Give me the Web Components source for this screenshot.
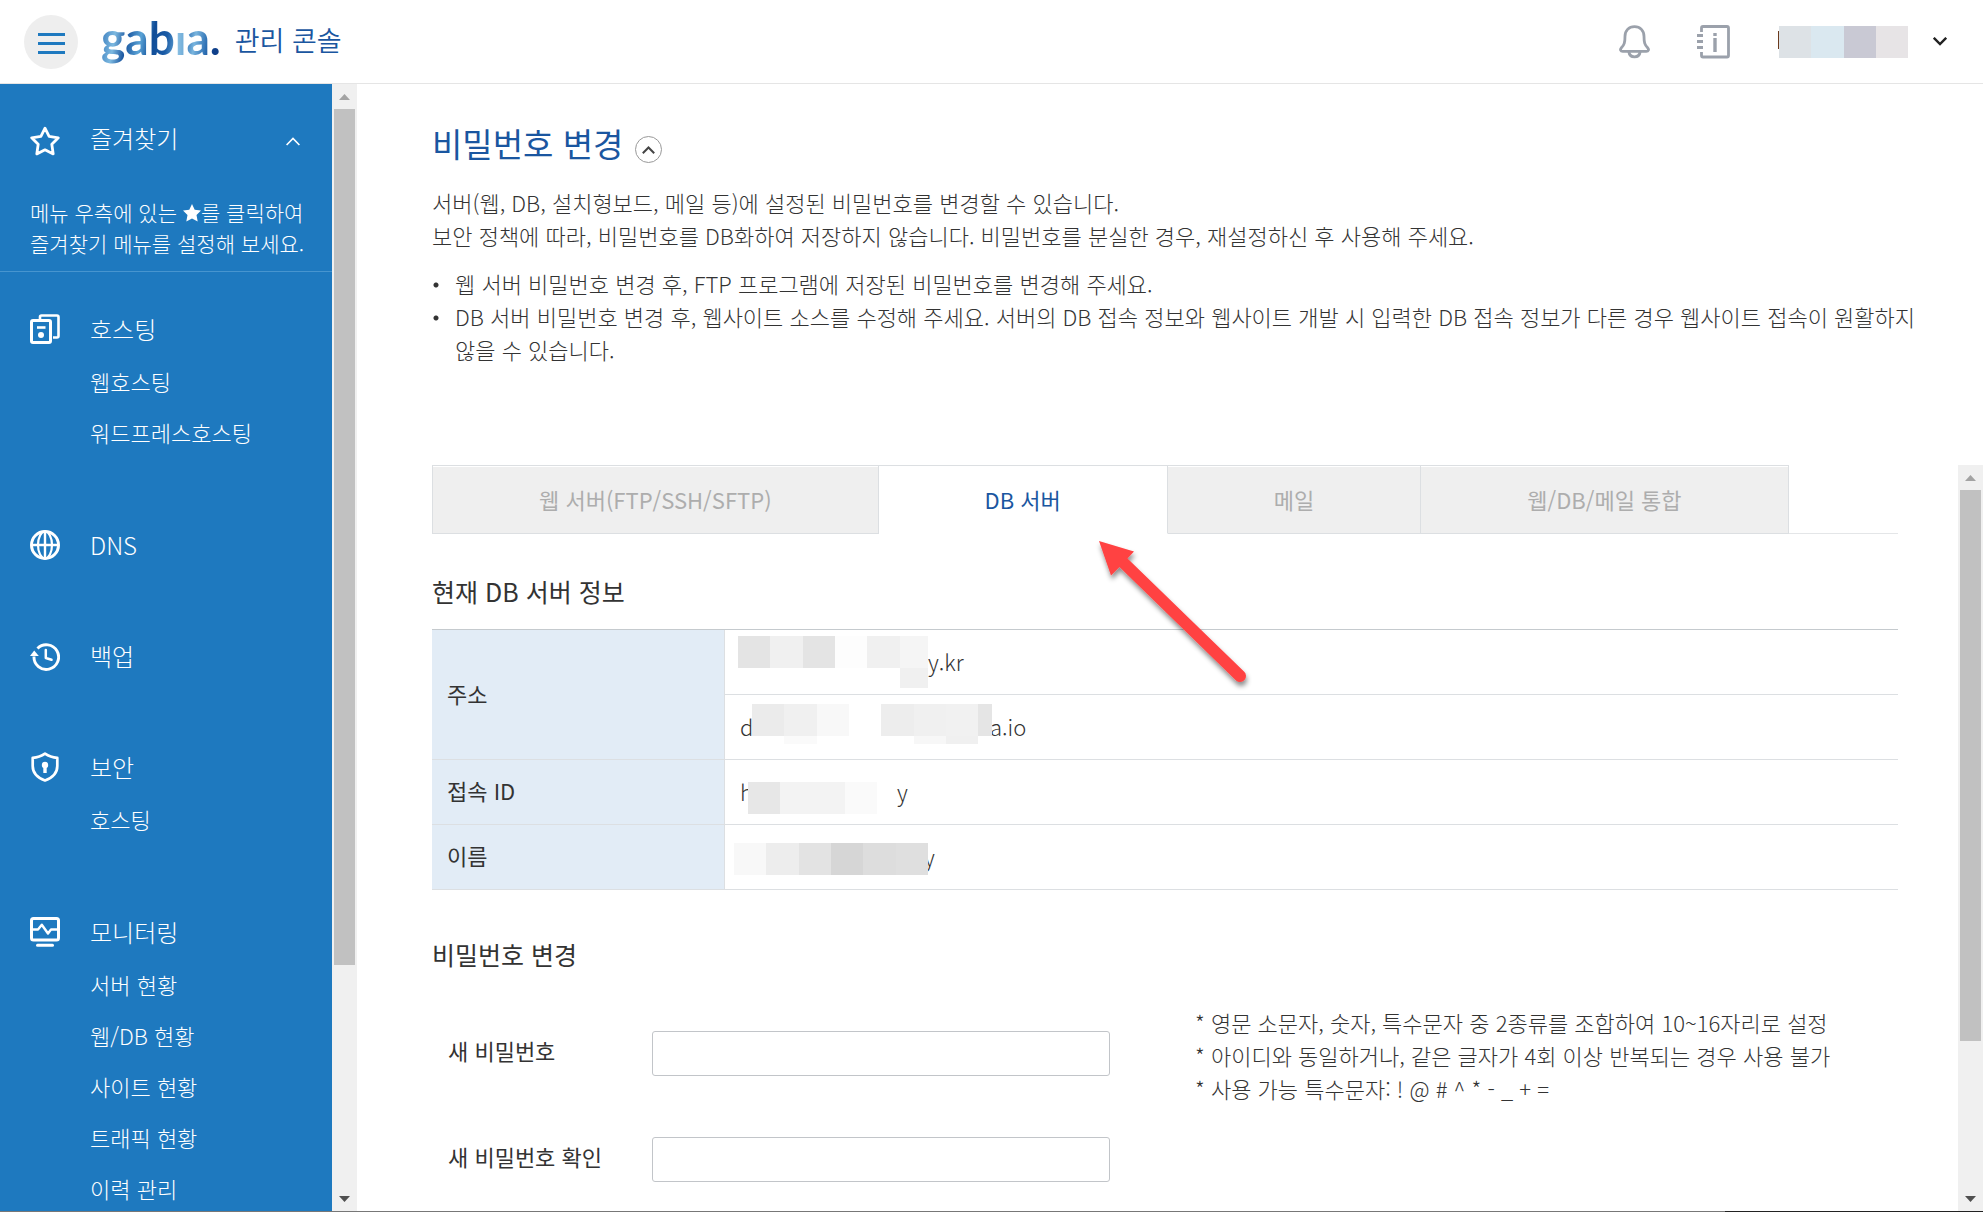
<!DOCTYPE html>
<html lang="ko">
<head>
<meta charset="utf-8">
<meta name="viewport" content="width=device-width, initial-scale=1">
<title>gabia. 관리 콘솔</title>
<style>
  :root {
    --blue: #1e79bf;
    --navy: #1a56a0;
    --ink: #333;
    --line: #dcdfe2;
    --fs-body: 22px;
    --fs-head: 25px;
    --row: 33px;
  }
  body {
    margin: 0;
    font-family: "Noto Sans CJK KR", "Noto Sans", sans-serif;
    font-size: var(--fs-body);
    font-weight: 300;
    color: var(--ink);
    word-break: keep-all;
    background: #fff;
  }
</style>
</head>
<body>
<console-app></console-app>

<script>
const define = (name, html, setup) => {
  const template = document.createElement('template');
  template.innerHTML = '<style>*{box-sizing:border-box}svg{display:block}</style>' + html;
  customElements.define(name, class extends HTMLElement {
    constructor() {
      super();
      this.attachShadow({ mode: 'open' }).append(template.content.cloneNode(true));
    }
    connectedCallback() { if (setup) setup(this, this.shadowRoot); }
  });
};

const ICONS = {
  star: '<path d="M15 2.2l4.1 8.1 9.2 1.5-6.5 6.5 1.4 9.6L15 23.8l-8.200 4.100 1.400-9.600L1.700 11.800l9.200-1.500z" stroke-width="2.8"/>',
  hosting: '<path d="M10 5V3q0-1.500 1.500-1.500h15.500q1.500 0 1.500 1.500v19q0 1.500-1.500 1.500H23" stroke-width="2.6"/><rect x="1.5" y="6.5" width="19" height="22" rx="1.5" stroke-width="3"/><path d="M7 13.500h8.500" stroke-width="2.6"/><circle cx="11" cy="21" r="3" fill="#fff" stroke="none"/>',
  globe: '<circle cx="15" cy="15" r="13.5" stroke-width="3"/><ellipse cx="15" cy="15" rx="7" ry="13.5" stroke-width="2.2"/><path d="M15 1.500v27M2 15h26" stroke-width="2.4"/>',
  backup: '<path d="M7.500 7.500A12.300 12.300 0 1 1 4 15.500" stroke-width="2.9"/><path d="M0 15l4.200-5.500L8.800 15z" fill="#fff" stroke="none"/><path d="M15.800 9v8l5.700 1.800" stroke-width="2.5" stroke-linecap="round"/>',
  shield: '<path d="M15 1.700C11.500 4.200 7 5.600 2.700 5.800V14c0 7 4.800 11.800 12.300 14.500C22.500 25.800 27.300 21 27.300 14V5.800C23 5.600 18.500 4.200 15 1.700z" stroke-width="2.7"/><circle cx="15" cy="13" r="3.2" fill="#fff" stroke="none"/><path d="M15 13v8" stroke-width="3.4"/>',
  monitor: '<rect x="1.5" y="1.5" width="27" height="21.5" rx="2" stroke-width="3"/><path d="M3 12.500h5l3.800-4.800 6.200 8.800 3-4h6" stroke-width="2.4"/><path d="M7.500 28.300h15" stroke-width="3" stroke-linecap="round"/>'
};

define('menu-icon', `
  <style>:host{display:block;width:30px;height:30px;flex:none}</style>
  <svg width="30" height="30" viewBox="0 0 30 30" fill="none" stroke="#fff" stroke-linejoin="round"></svg>`,
  (el, root) => { root.querySelector('svg').innerHTML = ICONS[el.getAttribute('name')] || ''; });

define('scroll-track', `
  <style>
    :host{display:flex;flex-direction:column;width:25px;flex:none;background:#f0f0f0;align-items:center}
    svg{flex:none}
    i{width:21px;background:#c1c1c1;flex:none}
    b{flex:1}
  </style>
  <svg width="25" height="25"><path d="M7 16l5.500-6 5.500 6z" fill="#a3a3a3"/></svg>
  <i></i><b></b>
  <svg width="25" height="25"><path d="M7 10l5.500 6 5.500-6z" fill="#505050"/></svg>`,
  (el, root) => { root.querySelector('i').style.height = el.getAttribute('thumb'); });

/* Blocks are "x,y,width,height,colour" separated by spaces. */
define('mosaic-mask', `
  <style>:host{display:block}</style><svg shape-rendering="crispEdges"></svg>`,
  (el, root) => {
    const svg = root.querySelector('svg');
    svg.setAttribute('width', el.getAttribute('width'));
    svg.setAttribute('height', el.getAttribute('height'));
    svg.innerHTML = el.getAttribute('blocks').trim().split(/\s+/).map(b => {
      const [x, y, w, h, c] = b.split(',');
      return `<rect x="${x}" y="${y}" width="${w}" height="${h}" fill="#${c}"/>`;
    }).join('');
  });

define('console-header', `
  <style>
    :host{display:flex;align-items:center;height:84px;border-bottom:1px solid #e5e5e5;padding:0 36px 0 24px;background:#fff;flex:none}
    button{border:0;background:none;padding:0;display:grid;place-items:center;cursor:pointer;font:inherit}
    .menu{width:54px;height:54px;border-radius:50%;background:#eee;padding-top:3px}
    .brand{display:flex;align-items:center;margin-left:23px;text-decoration:none;color:var(--navy)}
    .logo{font:700 46px/56px Lato,sans-serif;color:transparent;padding-bottom:8px;
      background:
        linear-gradient(100deg,#2a6db5 0,#7db9e0 18px,#1a56a0 30px,#5aa3d6 44px,#0f4c97 56px,#1a5ba6 70px,#6fb0dc 83px) 0 0/75px 100% no-repeat,
        linear-gradient(90deg,#8fc4e6,#5f9fd0) 75px 23px/12px 100% no-repeat,
        linear-gradient(100deg,#1a5ba6,#79b5de 12px,#2e70b4 24px,#0f3f8a 32px) 87px 0/50px 100% no-repeat;
      -webkit-background-clip:text;background-clip:text}
    .name{font-size:27px;line-height:40px;font-weight:350;margin-left:14px;padding-bottom:3px}
    .tools{margin-left:auto;display:flex;align-items:center}
    .info{margin-left:47px}
    .user{margin-left:48px;display:flex;align-items:center;gap:24px}
  </style>
  <button class="menu" aria-label="메뉴"><svg width="27" height="21" viewBox="0 0 27 21" fill="#1e79bf"><path d="M0 0h27v3H0zM0 9h27v3H0zM0 18h27v3H0z"/></svg></button>
  <a class="brand" href="#"><span class="logo">gabia.</span><span class="name">관리 콘솔</span></a>
  <div class="tools">
    <button aria-label="알림"><svg width="31" height="34" viewBox="0 0 31 34" fill="none" stroke="#9ba1ab" stroke-width="2.8"><path d="M15.500 1.600c-5.800 0-9.500 4.200-9.500 9.700 0 6.500-.8 8.600-3.600 11.500-1.700 1.800-.8 3.600 1.300 3.600h23.600c2.100 0 3-1.800 1.300-3.600-2.800-2.900-3.600-5-3.600-11.500 0-5.500-3.700-9.700-9.500-9.700z"/><path d="M9.800 26.500c.4 3.400 2.600 5.300 5.700 5.300s5.300-1.900 5.700-5.300"/></svg></button>
    <button class="info" aria-label="안내"><svg width="33" height="34" viewBox="0 0 33 34" fill="none" stroke="#9ba1ab" stroke-width="2.8"><path d="M4.500 7V3q0-1.500 1.500-1.500h24q1.500 0 1.500 1.500v27.500q0 1.500-1.500 1.500H6q-1.500 0-1.500-1.500v-3.500M0 10.500h6M0 16.500h6M0 22.500h6"/><path d="M18 13v14M18 8v3" stroke-width="3.4"/></svg></button>
    <button class="user" aria-label="계정">
      <mosaic-mask width="131" height="32" blocks="0,5,1,18,6b3a1e 1,0,32,32,dde2e6 33,0,33,32,dae8f0 66,0,32,32,c9c9d4 98,0,32,32,e7e4e6"></mosaic-mask>
      <svg width="14" height="9" viewBox="0 0 14 9" fill="none" stroke="#222" stroke-width="2.4"><path d="M.8.800L7 7l6.200-6.200"/></svg>
    </button>
  </div>`);

define('menu-group', `
  <style>
    :host{display:block}
    .head{display:flex;align-items:center;gap:30px;height:56px;padding-left:30px;font-size:24px;line-height:36px;color:#fff;text-decoration:none}
    nav{display:none;flex-direction:column;padding:0 0 3px 90px}
    nav.on{display:flex}
    ::slotted(a){color:#fff;text-decoration:none;line-height:49px;padding-bottom:2px;font-size:var(--fs-body)}
  </style>
  <a class="head" href="#"><span></span></a>
  <nav><slot></slot></nav>`,
  (el, root) => {
    const icon = document.createElement('menu-icon');
    icon.setAttribute('name', el.getAttribute('icon'));
    root.querySelector('.head').prepend(icon);
    root.querySelector('span').textContent = el.getAttribute('label');
    root.querySelector('nav').classList.toggle('on', el.children.length > 0);
  });

define('side-menu', `
  <style>
    :host{display:flex;width:357px;flex:none;min-height:0}
    .body{flex:1;background:var(--blue);color:#fff;overflow:hidden}
    .fav{padding:29px 30px 12px;border-bottom:1px solid #4795cf}
    button{display:flex;align-items:center;width:100%;height:56px;gap:30px;border:0;background:none;padding:0;color:#fff;font:inherit;font-size:24px;line-height:36px;text-align:left}
    button span{flex:1;padding-bottom:6px}
    button>svg{margin-right:2px}
    p{margin:28px 0 0;font-size:21px;line-height:31px;white-space:nowrap}
    p svg{display:inline-block;vertical-align:-1px}
    .groups{display:flex;flex-direction:column;gap:55px;padding-top:29px}
  </style>
  <div class="body">
    <section class="fav">
      <button aria-expanded="true"><menu-icon name="star"></menu-icon><span>즐겨찾기</span>
        <svg width="14" height="9" viewBox="0 0 14 9" fill="none" stroke="#fff" stroke-width="1.6"><path d="M.6 8L7 1.400 13.400 8"/></svg></button>
      <p>메뉴 우측에 있는 <svg width="18" height="18" viewBox="0 0 18 18" fill="#fff"><path d="M9 0l2.700 5.700 6.300.9-4.500 4.400 1.200 6.500L9 14.400l-5.700 3.100L4.500 11 0 6.600l6.300-.9z"/></svg>를 클릭하여<br>즐겨찾기 메뉴를 설정해 보세요.</p>
    </section>
    <div class="groups">
      <menu-group icon="hosting" label="호스팅"><a href="#">웹호스팅</a><a href="#">워드프레스호스팅</a></menu-group>
      <menu-group icon="globe" label="DNS"></menu-group>
      <menu-group icon="backup" label="백업"></menu-group>
      <menu-group icon="shield" label="보안"><a href="#">호스팅</a></menu-group>
      <menu-group icon="monitor" label="모니터링"><a href="#">서버 현황</a><a href="#">웹/DB 현황</a><a href="#">사이트 현황</a><a href="#">트래픽 현황</a><a href="#">이력 관리</a></menu-group>
    </div>
  </div>
  <scroll-track thumb="856px"></scroll-track>`);

define('page-intro', `
  <style>
    :host{display:block;padding:37px 60px 99px 75px;line-height:var(--row)}
    .title{display:flex;align-items:center;gap:12px;height:48px}
    h1{margin:0;padding-bottom:3px;font-size:33px;line-height:45px;font-weight:400;color:var(--navy)}
    button{width:27px;height:27px;margin-top:9px;padding:0;border:1px solid #999;border-radius:50%;background:#fff;display:grid;place-items:center}
    p{margin:17px 0 0}
    ul{margin:15px 0 0;padding:0;list-style:none}
    li{padding-left:23px;background:radial-gradient(circle at 4px 18px,#333 2px,transparent 3px)}
  </style>
  <div class="title"><h1>비밀번호 변경</h1>
    <button aria-label="설명 접기"><svg width="13" height="8" viewBox="0 0 13 8" fill="none" stroke="#444" stroke-width="2"><path d="M.8 7.200l5.700-5.700 5.700 5.700"/></svg></button></div>
  <p>서버(웹, DB, 설치형보드, 메일 등)에 설정된 비밀번호를 변경할 수 있습니다.<br>보안 정책에 따라, 비밀번호를 DB화하여 저장하지 않습니다. 비밀번호를 분실한 경우, 재설정하신 후 사용해 주세요.</p>
  <ul>
    <li>웹 서버 비밀번호 변경 후, FTP 프로그램에 저장된 비밀번호를 변경해 주세요.</li>
    <li>DB 서버 비밀번호 변경 후, 웹사이트 소스를 수정해 주세요. 서버의 DB 접속 정보와 웹사이트 개발 시 입력한 DB 접속 정보가 다른 경우 웹사이트 접속이 원활하지 않을 수 있습니다.</li>
  </ul>`);

define('server-tabs', `
  <style>
    :host{display:flex;height:69px}
    [role=tablist]{display:flex;border-top:1px solid var(--line);border-left:1px solid var(--line)}
    button{padding:0 106px 2px;border:0;border-right:1px solid var(--line);border-bottom:1px solid var(--line);
      box-shadow:inset 0 1px #fff;background:#efefef;color:#adadad;font:inherit;font-weight:400;white-space:nowrap}
    button[aria-selected=true]{background:#fff;color:var(--navy);border-bottom-color:#fff}
    b{flex:1;border-bottom:1px solid #e4e6e8}
  </style>
  <div role="tablist">
    <button role="tab" aria-selected="false">웹 서버(FTP/SSH/SFTP)</button>
    <button role="tab" aria-selected="true">DB 서버</button>
    <button role="tab" aria-selected="false">메일</button>
    <button role="tab" aria-selected="false">웹/DB/메일 통합</button>
  </div><b></b>`);

define('masked-value', `
  <style>
    :host{display:block;position:relative;height:64px;line-height:62px;padding-left:15px}
    div{display:flex}
    span:first-child{flex:none}
    mosaic-mask{position:absolute;left:0;top:0}
  </style>
  <div><span class="lead"></span><span class="tail"></span></div>`,
  (el, root) => {
    const lead = root.querySelector('.lead');
    lead.textContent = el.getAttribute('lead') || '';
    lead.style.width = el.getAttribute('hidden-width');
    root.querySelector('.tail').textContent = el.getAttribute('tail');
    const mask = document.createElement('mosaic-mask');
    mask.setAttribute('width', '300');
    mask.setAttribute('height', '64');
    mask.setAttribute('blocks', el.getAttribute('blocks'));
    root.append(mask);
  });

define('server-info', `
  <style>
    :host{display:block}
    h2{margin:38px 0 19px;font-size:var(--fs-head);line-height:38px;font-weight:400}
    table{width:100%;border-collapse:separate;border-spacing:0;border-top:1px solid #c5cace}
    th{width:293px;padding:0 15px 4px;background:#e2ecf6;background-clip:padding-box;font-weight:400;text-align:left;border-right:1px solid var(--line);border-bottom:1px solid var(--line)}
    td{padding:0;border-bottom:1px solid var(--line)}
  </style>
  <h2>현재 DB 서버 정보</h2>
  <table>
    <tr><th rowspan="2" scope="rowgroup">주소</th><td><masked-value hidden-width="188px" tail="y.kr"
      blocks="13,6,32,32,e4e4e4 45,6,33,32,f0f0f0 78,6,32,32,e4e4e4 110,6,32,32,fdfdfd 142,6,33,32,f0f0f0 175,6,28,32,f5f5f5 175,38,28,20,f0f0f0"></masked-value></td></tr>
    <tr><td><masked-value lead="d" hidden-width="250px" tail="a.io"
      blocks="27,9,32,32,ebebeb 59,9,33,32,f0f0f0 92,9,32,32,f8f8f8 59,41,33,8,fafafa 156,9,33,32,ededed 189,9,32,32,f0f0f0 221,9,32,32,f1f1f1 253,9,14,32,e5e5e5 189,41,32,8,f7f7f7 221,41,32,8,f0f0f0"></masked-value></td></tr>
    <tr><th scope="row">접속 ID</th><td><masked-value lead="h" hidden-width="157px" tail="y"
      blocks="23,22,32,32,e7e7e7 55,22,65,32,f3f3f3 120,22,32,32,fafafa"></masked-value></td></tr>
    <tr><th scope="row">이름</th><td><masked-value hidden-width="184px" tail="y"
      blocks="9,18,32,32,f8f8f8 41,18,33,32,ededed 74,18,32,32,e3e3e3 106,18,32,32,d6d6d6 138,18,33,32,dddddd 171,18,32,32,dfdfdf"></masked-value></td></tr>
  </table>`);

define('password-form', `
  <style>
    :host{display:block}
    h2{margin:45px 0 33px;font-size:var(--fs-head);line-height:38px;font-weight:400}
    form{display:flex;gap:85px}
    .fields{display:flex;flex-direction:column;gap:61px;padding:25px 0 0 16px}
    .field{display:grid;grid-template-columns:204px 458px;align-items:center}
    label{font-weight:400;padding-bottom:7px}
    input{width:100%;height:45px;border:1px solid #c2c5c9;border-radius:3px;background:#fff;font:inherit;padding:0 12px}
    ul{margin:0;padding:0;list-style:none;line-height:var(--row);white-space:nowrap}
  </style>
  <h2>비밀번호 변경</h2>
  <form>
    <div class="fields">
      <div class="field"><label for="pw">새 비밀번호</label><input id="pw" type="password"></div>
      <div class="field"><label for="pw2">새 비밀번호 확인</label><input id="pw2" type="password"></div>
    </div>
    <ul>
      <li>* 영문 소문자, 숫자, 특수문자 중 2종류를 조합하여 10~16자리로 설정</li>
      <li>* 아이디와 동일하거나, 같은 글자가 4회 이상 반복되는 경우 사용 불가</li>
      <li>* 사용 가능 특수문자: ! @ # ^ * - _ + =</li>
    </ul>
  </form>`);

define('pointer-arrow', `
  <style>:host{display:block;position:absolute;left:732px;top:66px;pointer-events:none}</style>
  <svg width="170" height="160" viewBox="0 0 170 160">
    <defs><filter id="s" x="-20%" y="-20%" width="140%" height="140%"><feDropShadow dx="1" dy="4" stdDeviation="2.5" flood-opacity=".45"/></filter></defs>
    <path filter="url(#s)" fill="#ff4343" d="M10 10L45 20.500 38.500 27.500 155 140.500A6 6 0 0 1 147 149.500L30.500 36 22 44.500z"/>
  </svg>`);

define('console-app', `
  <style>
    :host{display:flex;flex-direction:column;height:100vh;overflow:hidden}
    .work{display:flex;flex:1;min-height:0}
    main{display:flex;flex-direction:column;flex:1;min-width:0}
    .pane{display:flex;flex:1;min-height:0}
    .content{position:relative;flex:1;min-width:0;overflow:hidden;padding:0 60px 0 75px}
    .edge{height:1px;flex:none;background:linear-gradient(90deg,#777 87%,#222 87%)}
  </style>
  <console-header></console-header>
  <div class="work">
    <side-menu></side-menu>
    <main>
      <page-intro></page-intro>
      <div class="pane">
        <div class="content">
          <server-tabs></server-tabs>
          <server-info></server-info>
          <password-form></password-form>
          <pointer-arrow></pointer-arrow>
        </div>
        <scroll-track thumb="551px"></scroll-track>
      </div>
    </main>
  </div>
  <div class="edge"></div>`);
</script>
</body>
</html>
